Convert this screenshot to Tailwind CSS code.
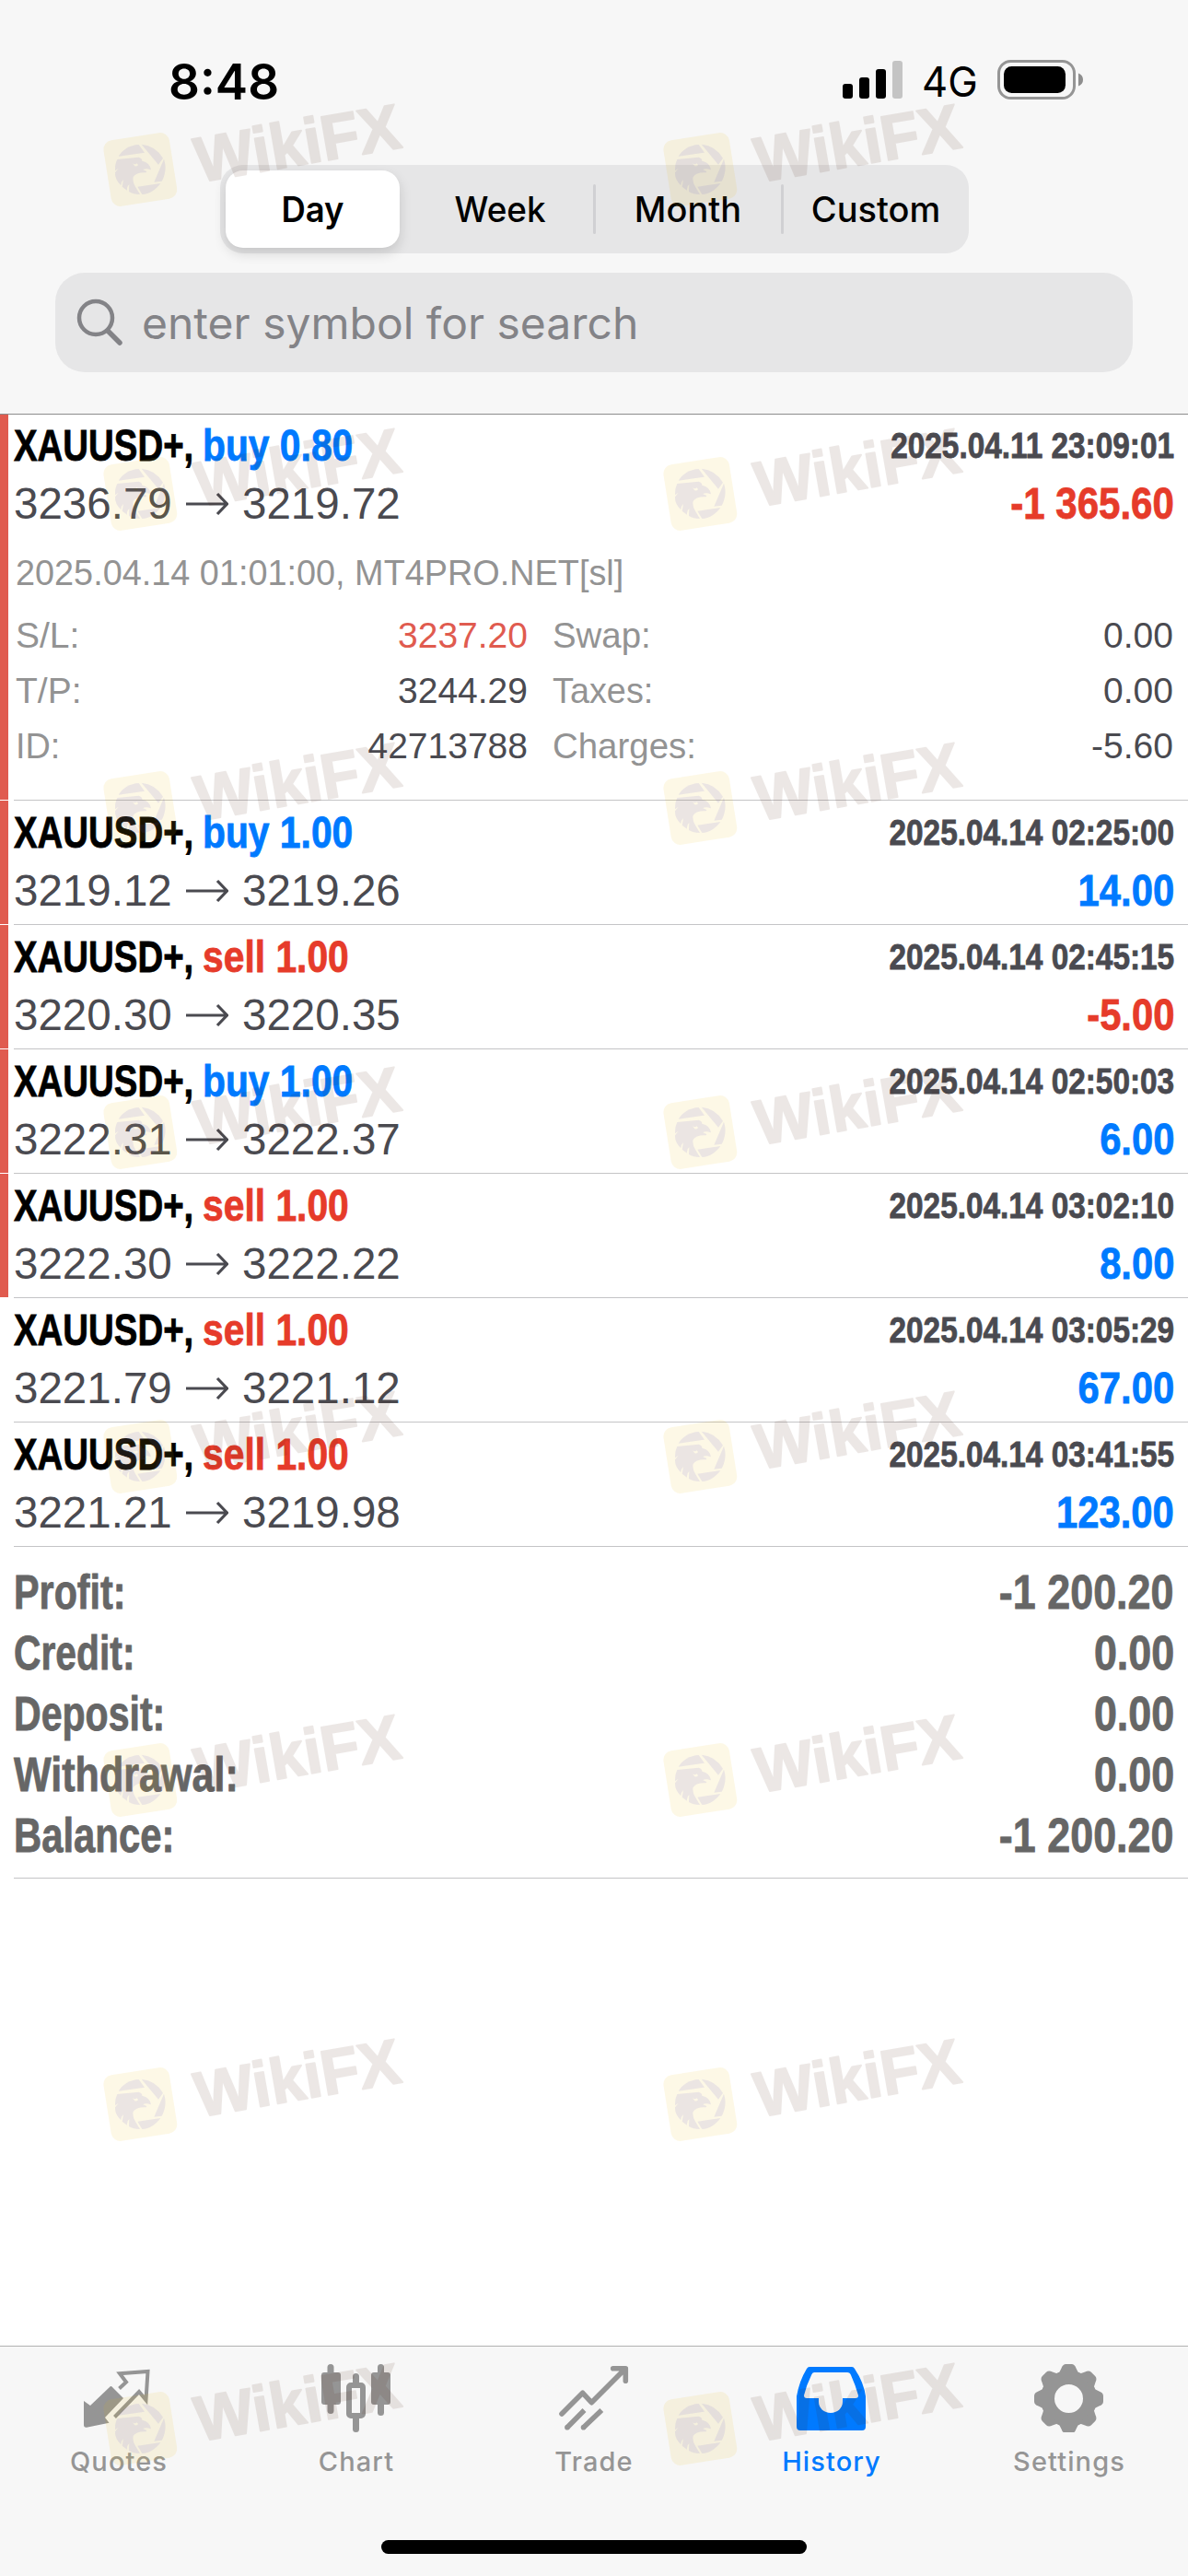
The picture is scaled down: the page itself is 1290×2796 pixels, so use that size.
<!DOCTYPE html>
<html lang="en">
<head>
<meta charset="utf-8">
<title>History</title>
<script src="https://cdn.jsdelivr.net/npm/@tailwindcss/browser@4"></script>
</head>
<body class="bg-white">
<div class="relative flex h-[2796px] w-[1290px] flex-col overflow-hidden bg-white font-['Liberation_Sans',Arial,sans-serif] text-[48px] whitespace-nowrap text-[#4a4a50]">

  <header class="flex h-[450px] shrink-0 flex-col items-center border-b border-[#8c8c8c] bg-[#f7f7f7] font-[Inter,sans-serif] text-black">
    <div class="flex h-[179px] w-full items-start justify-between pr-[113px] pl-[183px]">
      <span class="mt-[58px] text-[53px] leading-[62px] font-semibold">8:48</span>
      <div class="mt-[65px] flex items-start">
        <svg class="h-[43px] w-[65px]" viewBox="0 0 65 43"><rect y="26" width="11" height="16" rx="3"/><rect x="18" y="19" width="11" height="23" rx="3"/><rect x="36" y="10" width="11" height="32" rx="3"/><rect x="54" y="1" width="11" height="41" rx="3" fill="#c4c4c4"/></svg>
        <span class="mt-px ml-[21px] w-[63px] origin-left scale-x-[.97] text-[45px] leading-[46px]">4G</span>
        <svg class="ml-[19px] h-[43px] w-[94px]" viewBox="0 0 94 43"><rect x="1.5" y="1.5" width="82" height="40" rx="13" fill="none" stroke="#959595" stroke-width="3"/><rect x="7" y="7" width="67" height="29" rx="8.5"/><path d="M88 14.500Q93 16.500 93 21.500T88 28.500Z" fill="#8e8e8e"/></svg>
      </div>
    </div>
    <div class="flex h-24 w-[813px] items-center rounded-[25px] bg-[#e6e6e7] pl-[6px] text-[38px] font-medium">
      <span class="flex h-[84px] w-[189px] items-center justify-center rounded-[19px] bg-white shadow-[0_6px_14px_rgba(0,0,0,0.14)]"><b class="origin-center scale-x-[.96] font-semibold">Day</b></span>
      <span class="w-[210px] pl-[9px] text-center"><span class="inline-block scale-x-[.97]">Week</span></span>
      <i class="h-[54px] w-[3px] rounded bg-[#d0d0d3]"></i>
      <span class="w-[201px] text-center">Month</span>
      <i class="h-[54px] w-[3px] rounded bg-[#d0d0d3]"></i>
      <span class="w-[201px] text-center">Custom</span>
    </div>
    <div class="mt-[21px] flex h-[108px] w-[1170px] items-center rounded-[32px] bg-[#e6e6e7] pl-[23px] text-[#838387]">
      <svg class="h-[52px] w-[52px]" viewBox="0 0 52 52" fill="none" stroke="#838387" stroke-width="4.500" stroke-linecap="round"><circle cx="21" cy="21" r="18"/><path d="M34 35L47 48" stroke-width="5.500"/></svg>
      <span class="mt-px ml-[19px] text-[48px]">enter symbol for search</span>
    </div>
  </header>

  <main class="flex flex-1 flex-col">
    <section class="relative h-[419px] pt-[6px] pr-[15px] pl-[15px]">
      <i class="absolute top-0 left-0 h-[418px] w-[9px] bg-[#e05b4f]"></i>
      <div class="flex h-14 justify-between font-bold [-webkit-text-stroke-width:0.8px]">
        <div class="flex leading-[56px]"><span class="w-[205px] origin-left scale-x-[.8] text-black">XAUUSD+,</span><span class="origin-left scale-x-[.85] text-[#007aff]">buy 0.80</span></div>
        <span class="origin-right scale-x-[.855] text-[39px] leading-[55px]">2025.04.11 23:09:01</span>
      </div>
      <div class="mt-[7px] flex h-14 justify-between leading-[56px]">
        <div class="flex items-center"><span class="w-[187px] origin-left scale-x-[.99]">3236.79</span><svg class="h-[26px] w-[46px]" viewBox="0 0 46 26" fill="none" stroke="#4a4a50" stroke-width="3.200"><path d="M0 13H44M34 2L44.500 13L34 24"/></svg><span class="ml-[15px] origin-left scale-x-[.99]">3219.72</span></div>
        <span class="origin-right scale-x-[.875] font-bold text-[#e63b2a] [-webkit-text-stroke-width:0.8px]">-1 365.60</span>
      </div>
      <p class="mt-[17px] ml-[2px] h-[60px] origin-left scale-x-[.97] text-[39px] leading-[60px] text-[#939393]">2025.04.14 01:01:00, MT4PRO.NET[sl]</p>
      <div class="mt-2 mr-px ml-[2px] grid grid-cols-[556px_1fr] gap-x-[27px] text-[39px] leading-[60px]">
        <div class="flex justify-between"><span class="text-[#939393]">S/L:</span><span class="text-[#e05b4f]">3237.20</span></div>
        <div class="flex justify-between"><span class="origin-left scale-x-[.985] text-[#939393]">Swap:</span><span>0.00</span></div>
        <div class="flex justify-between"><span class="text-[#939393]">T/P:</span><span>3244.29</span></div>
        <div class="flex justify-between"><span class="origin-left scale-x-[.97] text-[#939393]">Taxes:</span><span>0.00</span></div>
        <div class="flex justify-between"><span class="origin-left scale-x-[.97] text-[#939393]">ID:</span><span>42713788</span></div>
        <div class="flex justify-between"><span class="origin-left scale-x-[.985] text-[#939393]">Charges:</span><span>-5.60</span></div>
      </div>
      <i class="absolute right-0 bottom-0 left-[15px] h-px bg-[#c4c4c6]"></i>
    </section>

    <div id="deals"></div>

    <section class="ml-[15px] flex h-[360px] flex-col border-b border-[#c4c4c6] pt-[17px] pr-[15px] text-[51px] leading-[66px] font-bold text-[#666] [-webkit-text-stroke-width:0.8px]">
      <div class="flex justify-between"><span class="origin-left scale-x-[.81]">Profit:</span><span class="origin-right scale-x-[.88]">-1 200.20</span></div>
      <div class="flex justify-between"><span class="origin-left scale-x-[.8]">Credit:</span><span class="origin-right scale-x-[.88]">0.00</span></div>
      <div class="flex justify-between"><span class="origin-left scale-x-[.805]">Deposit:</span><span class="origin-right scale-x-[.88]">0.00</span></div>
      <div class="flex justify-between"><span class="origin-left scale-x-[.845]">Withdrawal:</span><span class="origin-right scale-x-[.88]">0.00</span></div>
      <div class="flex justify-between"><span class="origin-left scale-x-[.82]">Balance:</span><span class="origin-right scale-x-[.88]">-1 200.20</span></div>
    </section>
  </main>

  <footer class="flex h-[250px] shrink-0 flex-col items-center border-t border-[#b2b2b2] bg-[#f7f7f7]">
    <nav class="grid w-full grid-cols-5 pt-[13px] font-[Inter,sans-serif] text-[29px] leading-[48px] font-medium tracking-[1.1px] text-[#959595]">
      <div class="flex flex-col items-center gap-2">
        <svg class="h-20 w-[86px]" viewBox="0 0 86 80"><path d="M5 46L12 51L33 31Q34.500 29 36 31L48 43L28 64L32.500 69.700L8 74.700Q5 75 5 72Z" fill="#959595"/><path d="M43.500 32.500L51 25.500L44 16.300L74.500 14L72.500 45L65 36L38.500 63.500" fill="none" stroke="#959595" stroke-width="4"/></svg>
        <span>Quotes</span>
      </div>
      <div class="flex flex-col items-center gap-2">
        <svg class="h-20 w-[86px]" viewBox="0 0 86 80" fill="#959595"><rect x="11.500" y="6" width="7" height="54" rx="3.500"/><rect x="5" y="15" width="21" height="35" rx="3"/><rect x="39" y="16" width="7" height="14" rx="3.500"/><rect x="39" y="60" width="7" height="20" rx="3.500"/><rect x="35" y="29" width="15" height="33" rx="2" fill="none" stroke="#959595" stroke-width="6"/><rect x="66" y="6" width="7" height="56" rx="3.500"/><rect x="59" y="15" width="21" height="35" rx="3"/></svg>
        <span>Chart</span>
      </div>
      <div class="flex flex-col items-center gap-2">
        <svg class="h-20 w-[86px]" viewBox="0 0 86 80" fill="none" stroke="#959595" stroke-width="5.600"><path d="M8 60L30.700 37.300L40.300 47.700L77 11M63.700 10.700H77.300V24.300" stroke-linecap="round" stroke-linejoin="round"/><path d="M13.700 75L32.500 56M31.300 75L51.300 56"/><g fill="#959595" stroke="none"><circle cx="13.900" cy="74.800" r="2.800"/><circle cx="31.500" cy="74.800" r="2.800"/></g></svg>
        <span>Trade</span>
      </div>
      <div class="flex flex-col items-center gap-2 text-[#007aff]">
        <svg class="h-20 w-[86px]" viewBox="0 0 86 80"><path transform="translate(5 9)" fill="#007aff" fill-rule="evenodd" d="M14 0H60Q62 0 63 2Q73 17 75 32V65Q75 69 71 69H4Q0 69 0 65V32Q3 15 11 2Q12 0 14 0ZM19 6Q17 6 16 9Q11 19 8 31Q8 34 11 34H24V38C24 45 30 50 37 50S50 45 50 38V34H64Q67 34 67 31Q64 20 59 9Q58 6 55 6Z"/></svg>
        <span>History</span>
      </div>
      <div class="flex flex-col items-center gap-2">
        <svg class="h-20 w-[86px]" viewBox="0 0 86 80" fill="#959595"><defs><path id="tooth" d="M-11 -27L-8 -33Q-6.500 -37.500 -3 -37.500H3Q6.500 -37.500 8 -33L11 -27Z"/></defs><g transform="translate(42.500 43.500)"><circle r="23" fill="none" stroke="#959595" stroke-width="15"/><use href="#tooth"/><use href="#tooth" transform="rotate(45)"/><use href="#tooth" transform="rotate(90)"/><use href="#tooth" transform="rotate(135)"/><use href="#tooth" transform="rotate(180)"/><use href="#tooth" transform="rotate(225)"/><use href="#tooth" transform="rotate(270)"/><use href="#tooth" transform="rotate(315)"/></g></svg>
        <span>Settings</span>
      </div>
    </nav>
    <div class="mt-[61px] h-[15px] w-[462px] rounded-full bg-black"></div>
  </footer>

  <svg class="pointer-events-none absolute inset-0 h-full w-full" viewBox="0 0 1290 2796">
    <defs>
      <g id="mark">
        <g transform="scale(.33333)">
          <rect x="78.500" y="173.500" width="217" height="217" rx="30" transform="rotate(-9 187 282)" fill="#ebb905" fill-opacity=".1"/>
          <g transform="translate(54 150)" fill="#4b46d2" fill-opacity=".1" fill-rule="evenodd">
            <path d="M62 89C74 68 100 52 128 51L147 77Z"/>
            <path d="M137 50Q182 54 207 95L192 116Z"/>
            <path d="M210 98C219 125 214 150 203 170L178 173Z"/>
            <path d="M124 188L199 177C184 198 162 212 139 213Z"/>
            <path d="M58 99L128 92Q139 95 139 104Q164 109 168 133L156 130Q145 129 142 133L154 138L152 142Q120 140 110 156Q106 170 118 190L132 213Q110 213 96 204L97 180Q88 188 90 200L74 188L78 165Q70 172 70 184Q50 165 51 142L62 128L51 136Q50 114 58 99ZM108 112Q116 118 122 112L126 117Q122 123 115 121Z"/>
          </g>
        </g>
        <text transform="translate(126 108) rotate(-9.800)" font-family="Liberation Sans, Arial, sans-serif" font-weight="700" font-size="69" textLength="225" lengthAdjust="spacingAndGlyphs" fill="#4b1e0a" stroke="#4b1e0a" stroke-width="2" stroke-linejoin="round" opacity=".1">WikiFX</text>
      </g>
    </defs>
    <g id="marks"></g>
  </svg>
</div>

<script>
const BLUE = 'text-[#007aff]', RED = 'text-[#e63b2a]';
const deals = [
  ['buy 1.00', BLUE, '2025.04.14 02:25:00', '3219.12', '3219.26', '14.00', BLUE, true],
  ['sell 1.00', RED, '2025.04.14 02:45:15', '3220.30', '3220.35', '-5.00', RED, true],
  ['buy 1.00', BLUE, '2025.04.14 02:50:03', '3222.31', '3222.37', '6.00', BLUE, true],
  ['sell 1.00', RED, '2025.04.14 03:02:10', '3222.30', '3222.22', '8.00', BLUE, true],
  ['sell 1.00', RED, '2025.04.14 03:05:29', '3221.79', '3221.12', '67.00', BLUE, false],
  ['sell 1.00', RED, '2025.04.14 03:41:55', '3221.21', '3219.98', '123.00', BLUE, false],
];
document.getElementById('deals').innerHTML = deals.map(([side, sideColor, time, from, to, profit, profitColor, stopped]) => `
  <section class="relative h-[135px] pt-[7px] pr-[15px] pl-[15px]">
    ${stopped ? '<i class="absolute top-0 left-0 h-[134px] w-[9px] bg-[#e05b4f]"></i>' : ''}
    <div class="flex h-14 justify-between font-bold [-webkit-text-stroke-width:0.8px]">
      <div class="flex leading-[56px]"><span class="w-[205px] origin-left scale-x-[.8] text-black">XAUUSD+,</span><span class="origin-left scale-x-[.85] ${sideColor}">${side}</span></div>
      <span class="origin-right scale-x-[.855] text-[39px] leading-[55px]">${time}</span>
    </div>
    <div class="mt-[7px] flex h-14 justify-between leading-[56px]">
      <div class="flex items-center"><span class="w-[187px] origin-left scale-x-[.99]">${from}</span><svg class="h-[26px] w-[46px]" viewBox="0 0 46 26" fill="none" stroke="#4a4a50" stroke-width="3.200"><path d="M0 13H44M34 2L44.500 13L34 24"/></svg><span class="ml-[15px] origin-left scale-x-[.99]">${to}</span></div>
      <span class="origin-right scale-x-[.87] font-bold [-webkit-text-stroke-width:0.8px] ${profitColor}">${profit}</span>
    </div>
    <i class="absolute right-0 bottom-0 left-[15px] h-px bg-[#c4c4c6]"></i>
  </section>`).join('');

const rows = [90, 442, 783, 1135, 1487, 1838, 2190, 2542];
document.getElementById('marks').innerHTML = rows.map(y =>
  `<use href="#mark" x="90" y="${y}"/><use href="#mark" x="698" y="${y}"/>`).join('');
</script>
</body>
</html>
